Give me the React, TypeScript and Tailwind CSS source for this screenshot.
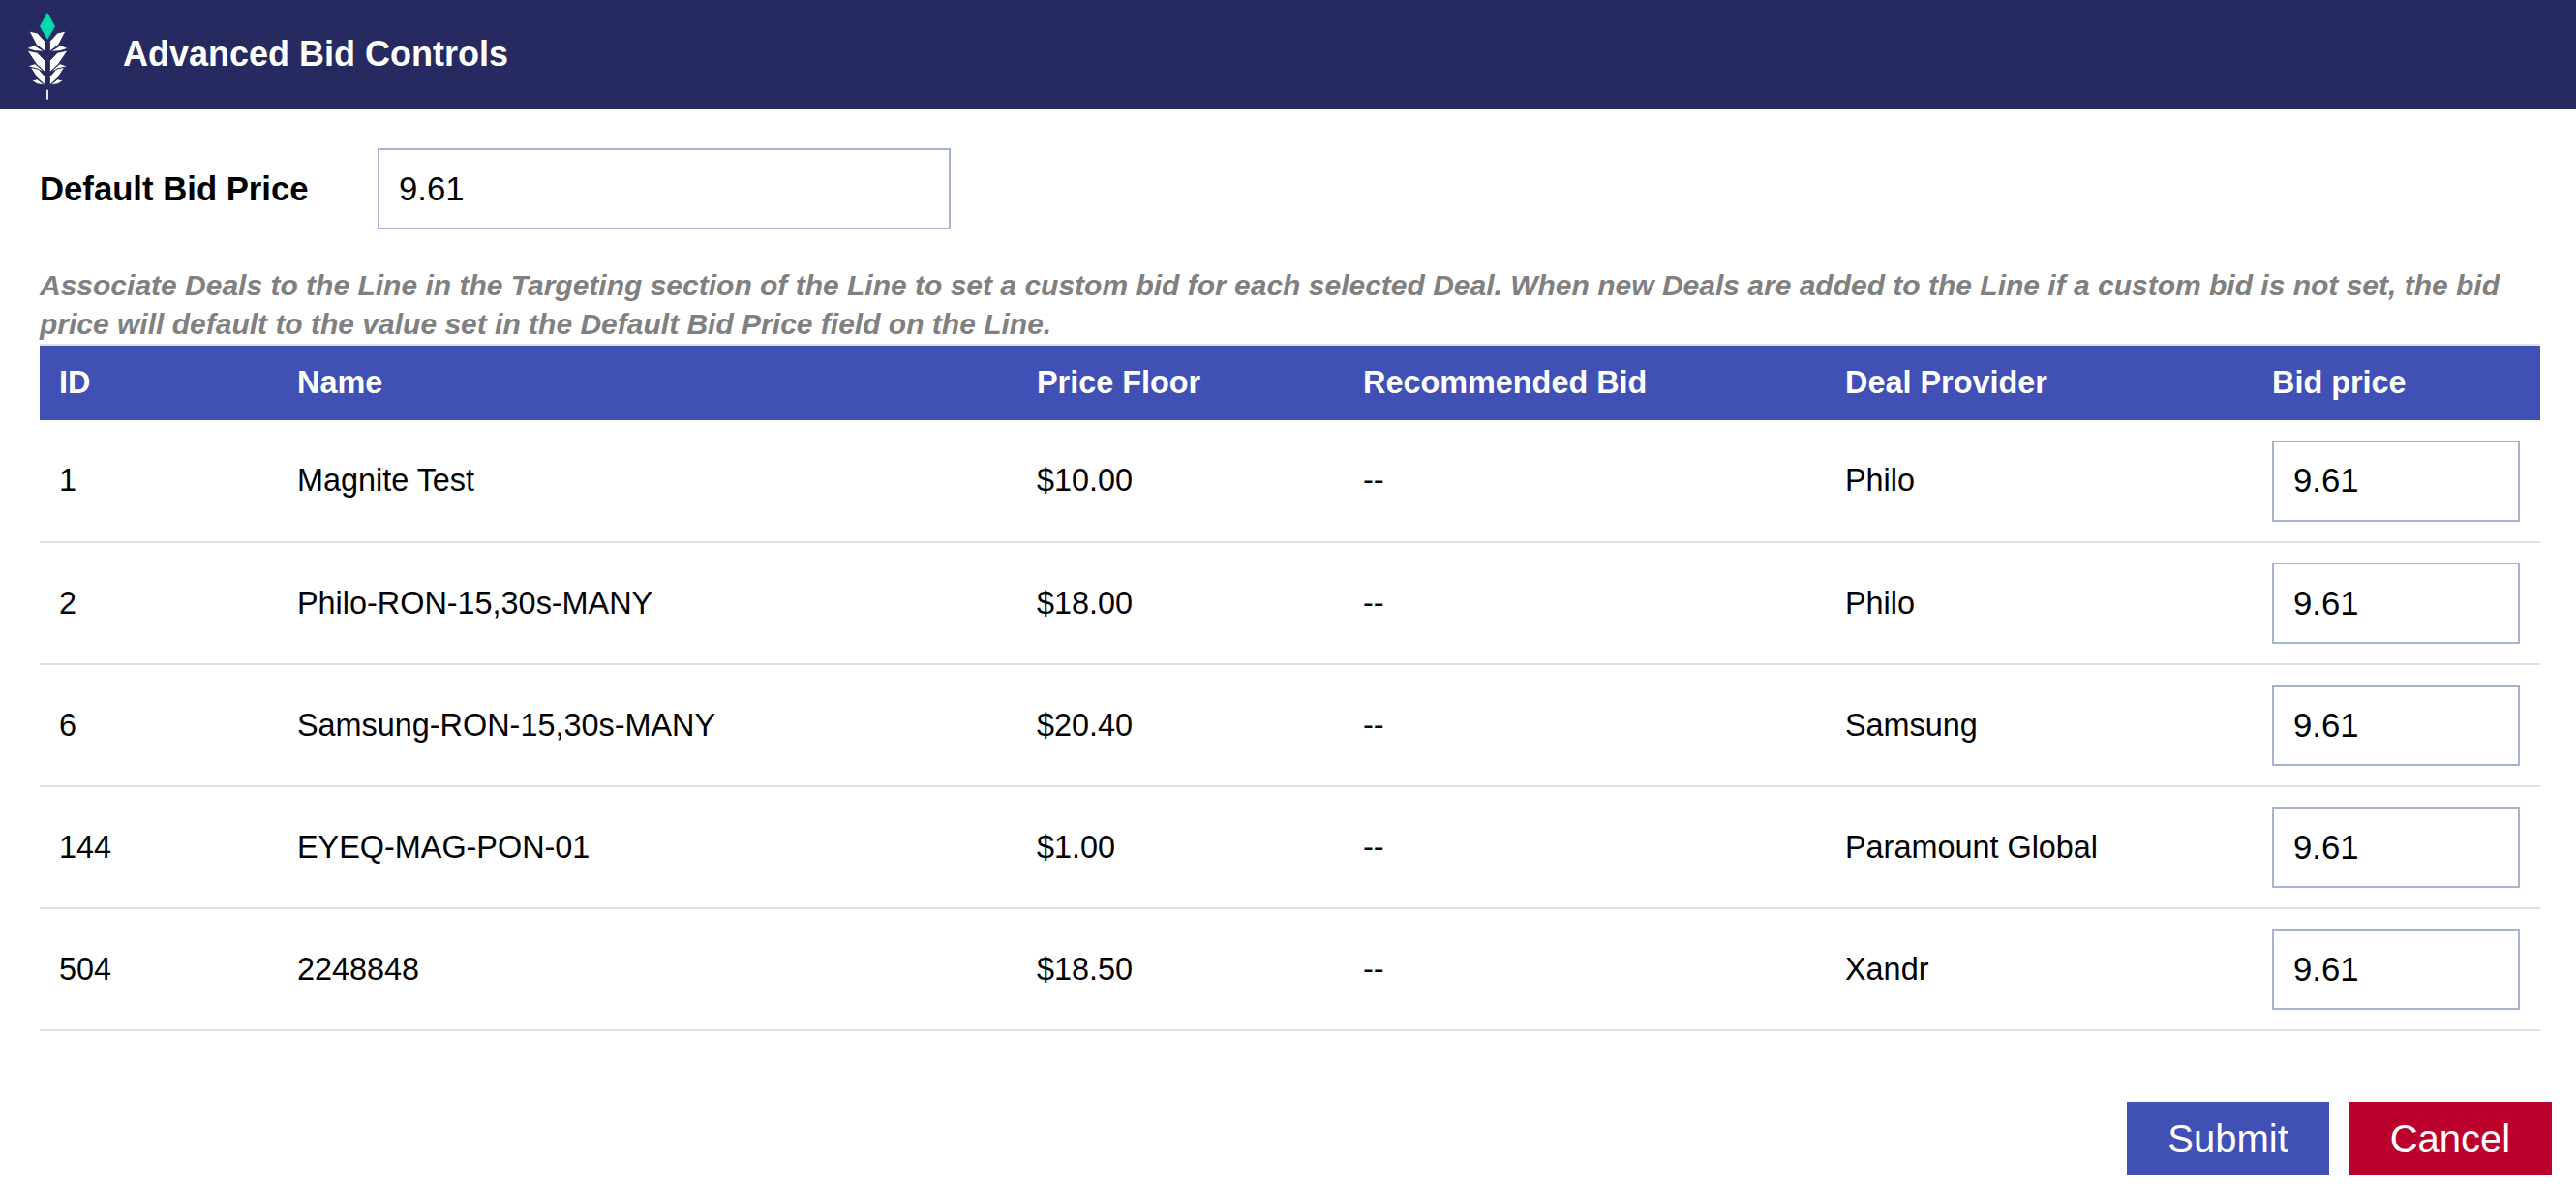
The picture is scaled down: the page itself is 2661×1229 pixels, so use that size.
const DEALS = [
  { id: "1", name: "Magnite Test", floor: "$10.00", provider: "Philo" },
  { id: "2", name: "Philo-RON-15,30s-MANY", floor: "$18.00", provider: "Philo" },
  { id: "6", name: "Samsung-RON-15,30s-MANY", floor: "$20.40", provider: "Samsung" },
  { id: "144", name: "EYEQ-MAG-PON-01", floor: "$1.00", provider: "Paramount Global" },
  { id: "504", name: "2248848", floor: "$18.50", provider: "Xandr" },
];

const HEADERS = ["ID", "Name", "Price Floor", "Recommended Bid", "Deal Provider", "Bid price"];

function LeafSide() {
  return (
    <g fill="#ffffff" stroke="#262a60" strokeWidth="3">
      <polygon points="52,150 76,140 108,160 78,158" />
      <polygon points="60,96 86,102 110,128 110,160 82,138" />
      <polygon points="55,205 78,197 108,222 82,214" />
      <polygon points="54,156 86,163 110,188 110,224 82,198" />
      <polygon points="68,250 85,245 109,264 85,260" />
      <polygon points="64,208 90,214 110,238 110,264 84,240" />
    </g>
  );
}

function Logo() {
  return (
    <svg viewBox="0 0 270 339" className="h-[113px] w-[90px] shrink-0">
      <polygon points="117,38 141,81 117,122 93,81" fill="#00dcaa" />
      <LeafSide />
      <g transform="matrix(-1 0 0 1 234 0)">
        <LeafSide />
      </g>
      <rect x="114" y="278" width="6" height="30" fill="#e6e6ee" />
    </svg>
  );
}

export default function App() {
  return (
    <div className="min-h-[1229px] bg-white font-['Liberation_Sans',Arial,sans-serif] text-[32.4px] text-black">
      <header className="flex h-[113px] items-center bg-[#262a60] pl-[10px]">
        <Logo />
        <h1 className="mb-[2px] ml-[27px] text-[36px] font-bold text-white">Advanced Bid Controls</h1>
      </header>

      <main className="pl-[41px] pr-[37px] pt-[40px]">
        <div className="flex items-center">
          <label className="w-[349px] text-[34.7px] font-bold">Default Bid Price</label>
          <input
            defaultValue="9.61"
            className="h-[84px] w-[592px] border-2 border-[#a5b3d1] pl-[20px] text-[34.7px] outline-none"
          />
        </div>

        <p className="mt-[38px] text-[30px] font-bold italic leading-[40px] text-[#808080]">
          Associate Deals to the Line in the Targeting section of the Line to set a custom bid for each selected Deal.
          When new Deals are added to the Line if a custom bid is not set, the bid price will default to the value set
          in the Default Bid Price field on the Line.
        </p>

        <table className="w-full table-fixed border-collapse border-t-2 border-[#e0e0e0]">
          <colgroup>
            <col className="w-[246px]" />
            <col className="w-[764px]" />
            <col className="w-[337px]" />
            <col className="w-[498px]" />
            <col className="w-[441px]" />
            <col />
          </colgroup>
          <thead>
            <tr className="h-[78px] bg-[#4050b5] text-left text-white">
              {HEADERS.map((label) => (
                <th key={label} className="pl-[20px] font-bold">
                  {label}
                </th>
              ))}
            </tr>
          </thead>
          <tbody>
            {DEALS.map((deal) => (
              <tr key={deal.id} className="h-[126px] border-b-2 border-[#e0e0e0]">
                <td className="pl-[20px]">{deal.id}</td>
                <td className="pl-[20px]">{deal.name}</td>
                <td className="pl-[20px]">{deal.floor}</td>
                <td className="pl-[20px]">--</td>
                <td className="pl-[20px]">{deal.provider}</td>
                <td className="pl-[20px]">
                  <input
                    defaultValue="9.61"
                    className="block h-[84px] w-[256px] border-2 border-[#a5b3d1] pl-[20px] text-[34.7px] outline-none"
                  />
                </td>
              </tr>
            ))}
          </tbody>
        </table>
      </main>

      <div className="mt-[73px] flex justify-end gap-[20px] pr-[25px]">
        <button className="h-[75px] w-[209px] bg-[#4050b5] text-[40px] text-white">Submit</button>
        <button className="h-[75px] w-[210px] bg-[#bb002b] text-[40px] text-white">Cancel</button>
      </div>
    </div>
  );
}
